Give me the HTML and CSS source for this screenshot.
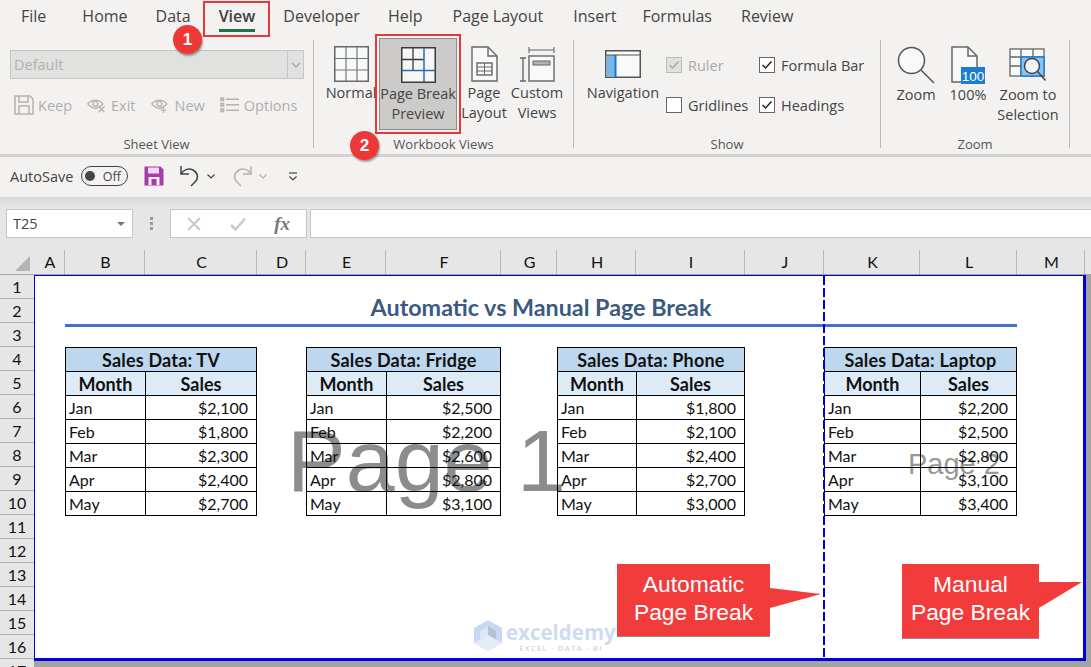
FILE: index.html
```html
<!DOCTYPE html>
<html>
  <head>
    <title>Page Break Preview</title>
    <link rel="stylesheet" href="styles.css">
  </head>

  <body>
    <!-- Ribbon tabs -->
    <div class="tabs">
      <span class="tab tab-file">File</span>
      <span class="tab">Home</span>
      <span class="tab">Data</span>
      <span class="tab tab-view">View</span>
      <span class="tab">Developer</span>
      <span class="tab tab-wide">Help</span>
      <span class="tab tab-wide">Page Layout</span>
      <span class="tab tab-insert">Insert</span>
      <span class="tab tab-formulas">Formulas</span>
      <span class="tab">Review</span>
    </div>

    <!-- Ribbon groups -->
    <div class="ribbon">
      <div class="group group-sheet">
        <div class="group-body sheet-body">
          <div class="style-select">
            <span class="style-value">Default</span>
            <span class="style-arrow">
              <svg width="10" height="6" viewBox="0 0 10 6"><path d="M1 1l4 4 4-4" fill="none" stroke="#a6a6a6" stroke-width="1.3"/></svg>
            </span>
          </div>
          <div class="sheet-actions">
            <span class="action">
              <svg width="20" height="20" viewBox="0 0 20 20" fill="none" stroke="#b5b3b1" stroke-width="1.5"><path d="M1 1h15l3 3v15H1z"/><path d="M5 1v6h9V1M5 19v-8h10v8"/></svg>
              Keep
            </span>
            <span class="action">
              <svg width="20" height="15" viewBox="0 0 24 18" fill="none" stroke="#b5b3b1" stroke-width="1.6"><path d="M1 7c5-6 13-6 18 0-2 3-5 4-7 5-4 1-8-1-11-5z"/><circle cx="10" cy="7" r="3"/><path d="M14 10l7 7M21 10l-7 7"/></svg>
              Exit
            </span>
            <span class="action">
              <svg width="20" height="15" viewBox="0 0 24 18" fill="none" stroke="#b5b3b1" stroke-width="1.6"><path d="M1 7c5-6 13-6 18 0-2 3-5 4-7 5-4 1-8-1-11-5z"/><circle cx="10" cy="7" r="3"/><path d="M15 11v7M11.500 14.500h7"/></svg>
              New
            </span>
            <span class="action">
              <svg width="20" height="16" viewBox="0 0 20 16" fill="none" stroke="#b5b3b1" stroke-width="1.6"><rect x="1" y="1" width="2.500" height="2.500"/><rect x="1" y="6.500" width="2.500" height="2.500"/><rect x="1" y="12" width="2.500" height="2.500"/><path d="M6 2.200h13M6 7.800h13M6 13.300h13"/></svg>
              Options
            </span>
          </div>
        </div>
        <div class="group-label">Sheet View</div>
      </div>

      <div class="group group-views">
        <div class="group-body views-body">
          <div class="big-btn btn-normal">
            <svg width="35" height="36" viewBox="0 0 35 36"><rect x=".75" y=".75" width="33.500" height="34.500" fill="#f8f9f9" stroke="#666" stroke-width="1.500"/><path d="M12 1v34M23 1v34M1 12.500h33M1 24h33" stroke="#777" stroke-width="1.200"/></svg>
            <span>Normal</span>
          </div>
          <div class="big-btn btn-break">
            <svg width="35" height="36" viewBox="0 0 35 36"><rect x=".75" y=".75" width="33.500" height="34.500" fill="#f4f6f7" stroke="#3a3a3a" stroke-width="1.500"/><path d="M12 1v22M1 12.500h22" stroke="#3a3a3a" stroke-width="1.300"/><path d="M23 1v34M1 23.500h33" stroke="#2b6cb8" stroke-width="1.500"/></svg>
            <span>Page Break</span>
            <span>Preview</span>
          </div>
          <div class="big-btn btn-page">
            <svg width="27" height="36" viewBox="0 0 27 36" fill="none" stroke="#666" stroke-width="1.400"><path d="M1 1h16l9 9v25H1z" fill="#f8f9f9"/><path d="M17 1v9h9"/><rect x="6" y="17" width="15" height="12"/><path d="M6 21h15M6 25h15M13.500 17v12" stroke-width="1"/></svg>
            <span>Page</span>
            <span>Layout</span>
          </div>
          <div class="big-btn btn-custom">
            <svg width="36" height="36" viewBox="0 0 36 36" fill="none" stroke="#666" stroke-width="1.400"><path d="M10 1v6M35 1v6M10 4h25" stroke-width="1.100"/><path d="M1 12h6M1 35h6M4 12v23"/><rect x="10" y="10" width="25" height="25" fill="#f8f9f9"/><rect x="14" y="15" width="17" height="4" fill="#b5b3b1" stroke-width="1"/></svg>
            <span>Custom</span>
            <span>Views</span>
          </div>
        </div>
        <div class="group-label">Workbook Views</div>
      </div>

      <div class="group group-show">
        <div class="group-body show-body">
          <div class="big-btn btn-nav">
            <svg class="nav-icon" width="36" height="28" viewBox="0 0 36 28"><rect x=".75" y=".75" width="34.500" height="26.500" fill="#f8f9f9" stroke="#555" stroke-width="1.500"/><rect x="1.500" y="5" width="9" height="22" fill="#79b6e8"/><path d="M10.500 5v22" stroke="#1a73c9" stroke-width="2"/><path d="M1 5h34" stroke="#555" stroke-width="1.200"/></svg>
            <span>Navigation</span>
          </div>
          <div class="checks">
            <label class="check check-off"><span class="box"><svg width="12" height="10" viewBox="0 0 12 10"><path d="M1.500 5l3 3 6-6.500" fill="none" stroke="#a6a6a6" stroke-width="1.500"/></svg></span>Ruler</label>
            <label class="check"><span class="box"><svg width="12" height="10" viewBox="0 0 12 10"><path d="M1.500 5l3 3 6-6.500" fill="none" stroke="#222" stroke-width="1.500"/></svg></span>Formula Bar</label>
            <label class="check"><span class="box"></span>Gridlines</label>
            <label class="check"><span class="box"><svg width="12" height="10" viewBox="0 0 12 10"><path d="M1.500 5l3 3 6-6.500" fill="none" stroke="#222" stroke-width="1.500"/></svg></span>Headings</label>
          </div>
        </div>
        <div class="group-label">Show</div>
      </div>

      <div class="group group-zoom">
        <div class="group-body zoom-body">
          <div class="big-btn btn-zoom">
            <svg width="38" height="38" viewBox="0 0 38 38" fill="none" stroke="#555" stroke-width="1.500"><circle cx="14.500" cy="14.500" r="13" fill="#f8f9f9"/><path d="M24 24l13 13"/></svg>
            <span>Zoom</span>
          </div>
          <div class="big-btn btn-hundred">
            <svg width="36" height="38" viewBox="0 0 36 38"><path d="M2 1h16l9 9v26H2z" fill="#f8f9f9" stroke="#666" stroke-width="1.500"/><path d="M18 1v9h9" fill="none" stroke="#666" stroke-width="1.500"/><rect x="11" y="21" width="24" height="17" fill="#1a7fd0"/><text x="23" y="35" text-anchor="middle" font-family="Liberation Sans" font-size="13.500" fill="#fff">100</text></svg>
            <span>100%</span>
          </div>
          <div class="big-btn btn-selection">
            <svg width="38" height="38" viewBox="0 0 38 38" fill="none" stroke="#666" stroke-width="1.300"><rect x="1" y="3" width="34" height="27" fill="#f8f9f9"/><path d="M1 11h34M1 20h34M12 3v27M24 3v27"/><rect x="12" y="11" width="23" height="19" fill="#8cc2ee" stroke="#1a7fd0" stroke-width="1.500"/><circle cx="23" cy="20" r="7.500" fill="#eef5fb" stroke="#444" stroke-width="1.500"/><path d="M28.500 25.500l8 9" stroke="#444" stroke-width="1.500"/></svg>
            <span>Zoom to</span>
            <span>Selection</span>
          </div>
        </div>
        <div class="group-label">Zoom</div>
      </div>
    </div>

    <!-- Quick access toolbar -->
    <div class="qat">
      <span class="autosave">AutoSave</span>
      <span class="toggle"><span class="toggle-dot"></span>Off</span>
      <svg class="qat-save" width="20" height="20" viewBox="0 0 20 20"><path d="M.5.500h16l3 3v16H.5z" fill="#a83aaa"/><rect x="4" y="1.500" width="11" height="6" fill="#f3d8f3"/><rect x="4.500" y="11" width="11" height="8" fill="#f3f2f1"/><rect x="7.500" y="13" width="5" height="6" fill="#a83aaa"/></svg>
      <svg class="qat-undo" width="20" height="22" viewBox="0 0 20 22" fill="none" stroke="#444" stroke-width="1.500"><path d="M1 1v8h8"/><path d="M1 9c3-5 8-6 12-4 5 3 6 8 2 12l-4 4"/></svg>
      <svg class="qat-caret" width="8" height="5" viewBox="0 0 8 5"><path d="M.5.500L4 4 7.500.500" fill="none" stroke="#444" stroke-width="1.200"/></svg>
      <svg class="qat-redo" width="20" height="22" viewBox="0 0 20 22" fill="none" stroke="#b5b3b1" stroke-width="1.500"><path d="M19 1v8h-8"/><path d="M19 9c-3-5-8-6-12-4-5 3-6 8-2 12l4 4"/></svg>
      <svg class="qat-caret qat-caret-off" width="8" height="5" viewBox="0 0 8 5"><path d="M.5.500L4 4 7.500.500" fill="none" stroke="#b5b3b1" stroke-width="1.200"/></svg>
      <svg class="qat-more" width="10" height="9" viewBox="0 0 10 9"><path d="M1 1h8" stroke="#444" stroke-width="1.200"/><path d="M1.500 4.500L5 8l3.500-3.500" fill="none" stroke="#444" stroke-width="1.200"/></svg>
    </div>

    <!-- Formula bar -->
    <div class="formula-bar">
      <div class="name-box">T25<span class="name-arrow"></span></div>
      <div class="grip"><i></i><i></i><i></i></div>
      <div class="fx-box">
        <svg width="14" height="14" viewBox="0 0 14 14"><path d="M1 1l12 12M13 1L1 13" stroke="#c8c8c8" stroke-width="2"/></svg>
        <svg width="16" height="14" viewBox="0 0 16 14"><path d="M1 8l4.500 4.500L15 1.500" fill="none" stroke="#c8c8c8" stroke-width="2.500"/></svg>
        <span class="fx">fx</span>
      </div>
      <div class="formula-input"></div>
    </div>

    <!-- Sheet -->
    <div class="sheet">
      <div class="corner"><span class="corner-mark"></span></div>
      <div class="col-heads sheet-cols">
        <span>A</span><span>B</span><span>C</span><span>D</span><span>E</span><span>F</span><span>G</span><span>H</span><span>I</span><span>J</span><span>K</span><span>L</span><span>M</span>
      </div>
      <div class="row-heads">
        <span>1</span><span>2</span><span>3</span><span>4</span><span>5</span><span>6</span><span>7</span><span>8</span><span>9</span><span>10</span><span>11</span><span>12</span><span>13</span><span>14</span><span>15</span><span>16</span><span>17</span>
      </div>

      <div class="page">
        <!-- Big grey page numbers sit behind the cells -->
        <div class="page-mark page-one">Page 1</div>
        <div class="page-mark page-two">Page 2</div>

        <div class="page-grid sheet-cols">
          <div class="sheet-title">Automatic vs Manual Page Break</div>

          <table class="sales sales-tv">
            <colgroup><col class="col-month"><col></colgroup>
            <tr><th colspan="2" class="sales-name">Sales Data: TV</th></tr>
            <tr class="sales-head"><th>Month</th><th>Sales</th></tr>
            <tr><td>Jan</td><td>$2,100</td></tr>
            <tr><td>Feb</td><td>$1,800</td></tr>
            <tr><td>Mar</td><td>$2,300</td></tr>
            <tr><td>Apr</td><td>$2,400</td></tr>
            <tr><td>May</td><td>$2,700</td></tr>
          </table>

          <table class="sales sales-fridge">
            <colgroup><col class="col-month"><col></colgroup>
            <tr><th colspan="2" class="sales-name">Sales Data: Fridge</th></tr>
            <tr class="sales-head"><th>Month</th><th>Sales</th></tr>
            <tr><td>Jan</td><td>$2,500</td></tr>
            <tr><td>Feb</td><td>$2,200</td></tr>
            <tr><td>Mar</td><td>$2,600</td></tr>
            <tr><td>Apr</td><td>$2,800</td></tr>
            <tr><td>May</td><td>$3,100</td></tr>
          </table>

          <table class="sales sales-phone">
            <colgroup><col class="col-month"><col></colgroup>
            <tr><th colspan="2" class="sales-name">Sales Data: Phone</th></tr>
            <tr class="sales-head"><th>Month</th><th>Sales</th></tr>
            <tr><td>Jan</td><td>$1,800</td></tr>
            <tr><td>Feb</td><td>$2,100</td></tr>
            <tr><td>Mar</td><td>$2,400</td></tr>
            <tr><td>Apr</td><td>$2,700</td></tr>
            <tr><td>May</td><td>$3,000</td></tr>
          </table>

          <table class="sales sales-laptop">
            <colgroup><col class="col-month"><col></colgroup>
            <tr><th colspan="2" class="sales-name">Sales Data: Laptop</th></tr>
            <tr class="sales-head"><th>Month</th><th>Sales</th></tr>
            <tr><td>Jan</td><td>$2,200</td></tr>
            <tr><td>Feb</td><td>$2,500</td></tr>
            <tr><td>Mar</td><td>$2,800</td></tr>
            <tr><td>Apr</td><td>$3,100</td></tr>
            <tr><td>May</td><td>$3,400</td></tr>
          </table>
        </div>

        <div class="break-line"></div>

        <div class="watermark">
          <svg width="28" height="31" viewBox="0 0 28 31"><path d="M14 0l14 8v15l-14 8-14-8V8z" fill="#c9d8f2"/><path d="M14 6l8 5v9l-8-5z" fill="#9fa9b8" opacity=".5"/><path d="M0 23l14-8 14 8-14 8z" fill="#e4ecf8"/><path d="M6 11l8-5v9l-8 4z" fill="#dfe7f5"/></svg>
          <div class="watermark-text">
            <div class="watermark-name">exceldemy</div>
            <div class="watermark-sub">EXCEL · DATA · BI</div>
          </div>
        </div>

        <div class="callout callout-auto">Automatic<br>Page Break<span class="callout-tail"></span></div>
        <div class="callout callout-manual">Manual<br>Page Break<span class="callout-tail"></span></div>
      </div>
    </div>

    <!-- Step badges -->
    <div class="badge badge-one">1</div>
    <div class="badge badge-two">2</div>
  </body>
</html>
```

FILE: styles.css
```css
/* Excel window */
body{
  margin: 0;
  width: 1091px;
  height: 667px;
  overflow: hidden;
  position: relative;
  background-color: #f3f2f1;
  color: #444;
  font-family: "Open Sans", "Noto Sans", sans-serif;
}

/* Tabs */
.tabs{
  height: 38px;
  display: flex;
  align-items: flex-start;
  padding-left: 21px;
  font-size: 16px;
  line-height: 32px;
}

.tab{
  margin-right: 28px;
}

.tab-file{
  margin-right: 36px;
}

.tab-wide{
  margin-right: 30px;
}

.tab-insert{
  margin-right: 26px;
}

.tab-formulas{
  margin-right: 29px;
}

.tab-view{
  position: relative;
  font-weight: 600;
  color: #3f3f3f;
}

/* red box and green underline of the active tab */
.tab-view::before{
  content: "";
  position: absolute;
  left: -16px;
  right: -15px;
  top: 1px;
  height: 36px;
  border: 2px solid #e8373b;
  box-sizing: border-box;
}

.tab-view::after{
  content: "";
  position: absolute;
  left: 0;
  right: 0;
  top: 29px;
  height: 3px;
  background-color: #217346;
}

/* Ribbon */
.ribbon{
  height: 119px;
  display: flex;
  border-bottom: 3px solid #d4d2d0;
  box-sizing: border-box;
  font-size: 14.500px;
}

.group{
  display: flex;
  flex-direction: column;
  height: 108px;
  margin-top: 2px;
  border-right: 1px solid #bdbbb9;
  box-sizing: border-box;
}

.group-sheet{ width: 314px; }
.group-views{ width: 260px; }
.group-show{ width: 307px; }
.group-zoom{ width: 189px; }

.group-body{
  flex: 1;
  display: flex;
}

.group-label{
  height: 16px;
  margin-bottom: -4px;
  line-height: 16px;
  text-align: center;
  font-size: 13px;
  color: #555;
}

/* Sheet view group */
.sheet-body{
  flex-direction: column;
  padding: 10px 9px 0 10px;
}

.style-select{
  height: 29px;
  display: flex;
  border: 1px solid #c6c6c6;
  background-color: #e1e1e0;
  box-sizing: border-box;
}

.style-value{
  flex: 1;
  padding-left: 3px;
  line-height: 27px;
  color: #b3b1af;
}

.style-arrow{
  width: 15px;
  border-left: 1px solid #c6c6c6;
  display: flex;
  align-items: center;
  justify-content: center;
}

.sheet-actions{
  display: flex;
  gap: 15px;
  margin-top: 13px;
  padding-left: 4px;
  color: #b0aeac;
}

.action{
  display: flex;
  align-items: center;
  gap: 4px;
  height: 26px;
}

/* Big buttons */
.big-btn{
  display: flex;
  flex-direction: column;
  align-items: center;
  line-height: 20px;
  height: 92px;
  padding-top: 6px;
  box-sizing: border-box;
  white-space: nowrap;
}

.big-btn svg{
  display: block;
  margin-bottom: 1px;
}

.views-body{
  padding-left: 10px;
}

.btn-normal{ width: 54px; margin-right: 1px; }
.btn-page{ width: 50px; margin-left: 2px; }
.btn-custom{ width: 54px; margin-left: 1px; }

.btn-break{
  width: 78px;
  margin-top: -2px;
  padding-top: 8px;
  background-color: #cdcbc9;
  border: 1px solid #8f8e8c;
  box-sizing: border-box;
  outline: 2px solid #e8373b;
  outline-offset: 2px;
}

.show-body{
  padding-left: 11px;
}

.btn-nav{
  width: 76px;
}

.big-btn .nav-icon{
  margin-top: 4px;
  margin-bottom: 5px;
}

.checks{
  display: grid;
  grid-template-columns: 93px 110px;
  grid-template-rows: 40px 40px;
  padding: 5px 0 0 5px;
  align-items: center;
  white-space: nowrap;
}

.check{
  display: flex;
  align-items: center;
  gap: 6px;
}

.box{
  width: 16px;
  height: 16px;
  border: 1px solid #666;
  background-color: #fff;
  box-sizing: border-box;
  display: flex;
  align-items: center;
  justify-content: center;
}

.check-off{
  color: #aaa8a6;
}

.check-off .box{
  border-color: #bdbbb9;
  background-color: #e1e1e0;
}

.zoom-body{
  padding-left: 9px;
}

.btn-zoom{ width: 52px; }
.btn-hundred{ width: 52px; }
.btn-selection{ width: 64px; margin-left: 2px; }

/* Quick access toolbar */
.qat{
  height: 40px;
  display: flex;
  align-items: center;
  padding: 0 0 2px 10px;
  box-sizing: border-box;
  font-size: 14.500px;
}

.autosave{
  width: 71px;
}

.toggle{
  width: 47px;
  height: 20px;
  border: 1px solid #444;
  border-radius: 10px;
  box-sizing: border-box;
  display: flex;
  align-items: center;
  justify-content: flex-end;
  padding-right: 6px;
  font-size: 12.500px;
}

.toggle-dot{
  width: 10px;
  height: 10px;
  border-radius: 50%;
  background-color: #444;
  margin-right: 8px;
}

.qat-save{ margin-left: 16px; }
.qat-undo{ margin-left: 16px; }
.qat-caret{ margin-left: 7px; }
.qat-redo{ margin-left: 17px; }
.qat-caret-off{ margin-left: 7px; }
.qat-more{ margin-left: 21px; }

/* Formula bar */
.formula-bar{
  height: 53px;
  display: flex;
  padding: 12px 0 0 6px;
  box-sizing: border-box;
  background: linear-gradient(#d8d8d8, #e6e6e6 10px);
}

.name-box{
  width: 127px;
  height: 29px;
  position: relative;
  border: 1px solid #c6c6c6;
  background-color: #fff;
  box-sizing: border-box;
  padding-left: 6px;
  font-size: 14.500px;
  line-height: 27px;
}

.name-arrow{
  position: absolute;
  right: 7px;
  top: 12px;
  border: 4px solid transparent;
  border-top-color: #777;
}

.grip{
  width: 37px;
  display: flex;
  flex-direction: column;
  align-items: center;
  justify-content: center;
  gap: 2px;
  padding-bottom: 12px;
}

.grip i{
  width: 3px;
  height: 3px;
  background-color: #999;
}

.fx-box{
  width: 137px;
  height: 29px;
  display: flex;
  align-items: center;
  justify-content: space-between;
  padding: 0 16px;
  border: 1px solid #c6c6c6;
  background-color: #fff;
  box-sizing: border-box;
}

.fx{
  font-family: "Liberation Serif", serif;
  font-style: italic;
  font-weight: bold;
  font-size: 19px;
  color: #777;
}

.formula-input{
  flex: 1;
  height: 29px;
  margin-left: 3px;
  border: 1px solid #c6c6c6;
  border-right: 0;
  background-color: #fff;
  box-sizing: border-box;
}

/* Sheet */
.sheet{
  display: grid;
  grid-template-columns: 34px 1fr;
  grid-template-rows: 25px 392px;
  background-color: #a3a3a3;
  font-family: Lato, sans-serif;
  color: #111;
}

.sheet-cols{
  display: grid;
  grid-template-columns: 31px 80px 112px 49px 80px 115px 56px 79px 109px 79px 96px 97px 68px;
}

.corner{
  background-color: #e6e6e6;
  border-bottom: 1px solid #a3a3a3;
  position: relative;
}

.corner-mark{
  position: absolute;
  right: 4px;
  bottom: 3px;
  border-style: solid;
  border-width: 0 0 15px 15px;
  border-color: transparent transparent #b4b4b4 transparent;
}

.col-heads{
  background-color: #e6e6e6;
  border-bottom: 1px solid #a3a3a3;
  font-size: 16px;
  line-height: 24px;
  text-align: center;
}

.col-heads span{
  border-right: 1px solid #b8b8b8;
  padding-left: 2px;
}

.row-heads{
  display: grid;
  grid-auto-rows: 24px;
  background-color: #e6e6e6;
  font-size: 16px;
  line-height: 24px;
  text-align: center;
  overflow: hidden;
}

.row-heads span{
  border-bottom: 1px solid #b0b0b0;
  box-sizing: border-box;
}

.page{
  position: relative;
  width: 1052px;
  height: 386px;
  box-sizing: border-box;
  background-color: #fff;
  border: solid #0000d8;
  border-width: 1px 3px 3px 1px;
  overflow: hidden;
}

.page-grid{
  position: relative;
  grid-template-rows: repeat(16, 24px);
  margin-left: -1px;
  margin-top: -1px;
}

.sheet-title{
  grid-column: 2 / 13;
  grid-row: 2;
  height: 25px;
  border-bottom: 3px solid #4472c4;
  text-align: center;
  font-size: 23.300px;
  line-height: 17px;
  font-weight: bold;
  color: #3a5a80;
}

/* Sales tables */
.sales{
  grid-row: 4 / 11;
  width: 100%;
  height: 169px;
  table-layout: fixed;
  border-collapse: collapse;
  font-size: 16px;
}

.sales-tv{ grid-column: 2 / 4; }
.sales-fridge{ grid-column: 5 / 7; }
.sales-phone{ grid-column: 8 / 10; }
.sales-laptop{ grid-column: 11 / 13; }

.sales-tv .col-month,
.sales-fridge .col-month{ width: 80px; }
.sales-phone .col-month{ width: 79px; }
.sales-laptop .col-month{ width: 96px; }

.sales th,
.sales td{
  border: 1px solid #000;
  padding: 0 3px;
  height: 24px;
  box-sizing: border-box;
  overflow: hidden;
  white-space: nowrap;
}

.sales-name{
  background-color: #bdd7ee;
  font-size: 18px;
  letter-spacing: 0.2px;
}

.sales-head th{
  background-color: #ddebf7;
  font-size: 18px;
}

.sales td:last-child{
  text-align: right;
  padding-right: 8px;
}

/* Big grey page numbers */
.page-mark{
  position: absolute;
  font-family: "Liberation Sans", Arial, sans-serif;
  color: #8c8c8c;
  white-space: nowrap;
}

.page-one{
  left: 252px;
  top: 135px;
  font-size: 88px;
  line-height: 100px;
}

.page-two{
  left: 873px;
  top: 170px;
  font-size: 29px;
  line-height: 36px;
  color: #999;
}

.break-line{
  position: absolute;
  left: 788px;
  top: 0;
  bottom: 0;
  width: 2px;
  background: repeating-linear-gradient(#0000d8 0, #0000d8 9px, transparent 9px, transparent 12px);
}

/* Watermark */
.watermark{
  position: absolute;
  left: 439px;
  top: 344px;
  display: flex;
  gap: 4px;
}

.watermark-text{
  padding-top: 2px;
}

.watermark-name{
  font-family: "Open Sans", sans-serif;
  font-weight: bold;
  font-size: 20.500px;
  line-height: 20px;
  color: #cddcf3;
}

.watermark-sub{
  margin-top: 1px;
  font-family: "Open Sans", sans-serif;
  font-size: 8px;
  line-height: 9px;
  letter-spacing: 1.200px;
  color: #c9c9c9;
  text-align: center;
}

/* Red callouts */
.callout{
  position: absolute;
  top: 288px;
  height: 73px;
  box-sizing: border-box;
  padding-top: 6px;
  background-color: #f23c3c;
  border-bottom: 1px solid #8d8d8d;
  color: #fff;
  font-family: "Liberation Sans", Arial, sans-serif;
  font-size: 22.800px;
  line-height: 28px;
  text-align: center;
}

.callout-auto{
  left: 582px;
  width: 153px;
}

.callout-manual{
  left: 867px;
  width: 137px;
  height: 75px;
}

.callout-tail{
  position: absolute;
  left: 100%;
  top: 24px;
  width: 51px;
  height: 20px;
  background-color: #f23c3c;
  clip-path: polygon(0 0, 100% 30%, 0 100%);
}

.callout-manual .callout-tail{
  top: 18px;
  width: 43px;
  height: 26px;
  clip-path: polygon(0 0, 100% 0, 0 100%);
}

/* Step badges */
.badge{
  position: absolute;
  width: 29px;
  height: 29px;
  border-radius: 50%;
  background-color: #ee3838;
  box-shadow: 1px 2px 2px rgba(0, 0, 0, 0.35);
  color: #fff;
  font-family: "Liberation Sans", Arial, sans-serif;
  font-weight: bold;
  font-size: 17px;
  line-height: 29px;
  text-align: center;
}

.badge-one{
  left: 173px;
  top: 25px;
}

.badge-two{
  left: 350px;
  top: 131px;
}
```
